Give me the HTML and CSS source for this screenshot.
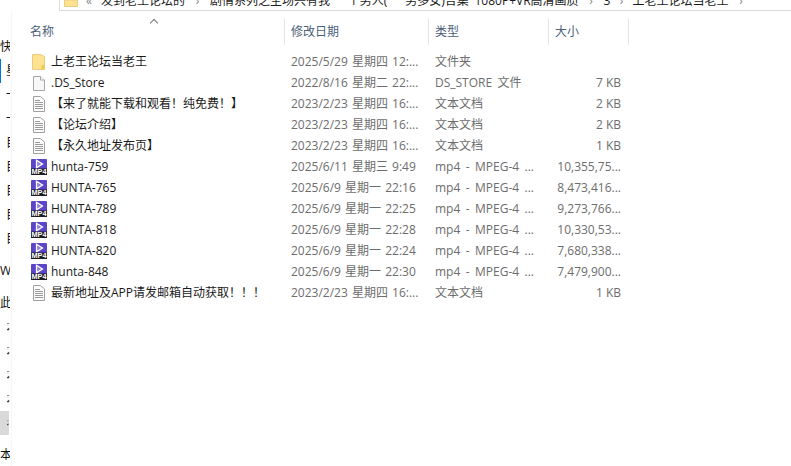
FILE: index.html
```html
<!DOCTYPE html>
<html lang="zh-CN">
<head>
    <meta charset="UTF-8">
    <meta name="viewport" content="width=device-width, initial-scale=1.0">
    <title>上老王论坛当老王</title>
    <link rel="stylesheet" href="styles.css">
</head>
<body>
    <svg class="icon-defs" width="0" height="0">
        <symbol id="pin" viewBox="0 0 4 12">
            <path d="M0 1.500H3M0 9.500L2.500 7.500V10H0Z" fill="#444" stroke="#333" stroke-width="0.800"/>
        </symbol>
        <symbol id="folder" viewBox="0 0 16 16">
            <path d="M1.500 0.500H9L13.500 2.500V15.500H1.500Z" fill="#ffe28f" stroke="#e8cd80"/>
            <path d="M10.500 11H13V15H10.500Z" fill="#f3c64f"/>
        </symbol>
        <symbol id="blank" viewBox="0 0 16 16">
            <path d="M2.500 1.500H9.500L13.500 5V15.500H2.500Z" fill="#f8f8f8" stroke="#a6a6a6"/>
            <path d="M9.500 1.500V5H13.500" fill="#fff" stroke="#a6a6a6"/>
        </symbol>
        <symbol id="txt" viewBox="0 0 16 16">
            <path d="M2.500 0.500H9.500L13.500 4V15.500H2.500Z" fill="#fbfbfb" stroke="#a0a0a0"/>
            <path d="M4 4.500H9M4 6.500H12M4 8.500H12M4 10.500H12M4 12.500H12" stroke="#9a9a9a"/>
        </symbol>
        <symbol id="mp4" viewBox="0 0 16 16">
            <path d="M1 0H15a1 1 0 0 1 1 1V10H0V1a1 1 0 0 1 1-1Z" fill="#5b45c8"/>
            <path d="M5.500 1.200L11.500 5L5.500 8.800Z" fill="#8f7fe0" stroke="#fff" stroke-width="1.300"/>
            <rect y="9.500" width="16" height="6.500" fill="#1c1c22"/>
            <text x="8" y="15.300" textLength="15" lengthAdjust="spacingAndGlyphs" class="mp4-label">MP4</text>
        </symbol>
    </svg>

    <div class="addressbar">
        <svg class="addr-folder" width="14" height="7" viewBox="0 0 14 7">
            <path d="M0.500 0V6.500H13.500V0Z" fill="#ffe28f" stroke="#e8cd80"/>
        </svg>
        <span class="crumb-back">«</span>
        <span class="crumb">发到老王论坛的</span>
        <span class="crumb-sep">›</span>
        <span class="crumb crumb-long">剧情系列之圣场兴有我 一个男人( 一男多女)合集 1080P+VR高清画质</span>
        <span class="crumb-sep">›</span>
        <span class="crumb">3</span>
        <span class="crumb-sep short">›</span>
        <span class="crumb">上老王论坛当老王</span>
        <span class="crumb-sep">›</span>
    </div>

    <div class="explorer">
        <nav class="sidebar">
            <div class="nav-item head">快速访问</div>
            <div class="nav-item current">星标</div>
            <div class="nav-item">一</div>
            <div class="nav-item">一</div>
            <div class="nav-item">目录</div>
            <div class="nav-item">目录</div>
            <div class="nav-item">目录</div>
            <div class="nav-item">目录</div>
            <div class="nav-item">目录</div>
            <div class="nav-item head">WPS</div>
            <div class="nav-item head">此电脑</div>
            <div class="nav-item pin"><svg width="4" height="12"><use href="#pin"/></svg></div>
            <div class="nav-item pin"><svg width="4" height="12"><use href="#pin"/></svg></div>
            <div class="nav-item pin"><svg width="4" height="12"><use href="#pin"/></svg></div>
            <div class="nav-item pin"><svg width="4" height="12"><use href="#pin"/></svg></div>
            <div class="nav-item pin selected"><svg width="4" height="12"><use href="#pin"/></svg></div>
            <div class="nav-item head">本地磁盘</div>
        </nav>

        <main class="files">
            <div class="file-head">
                <div class="col-head name-head">名称<span class="sort-arrow"></span></div>
                <div class="col-head">修改日期</div>
                <div class="col-head">类型</div>
                <div class="col-head">大小</div>
            </div>

            <div class="file-row">
                <div class="name"><svg class="ficon"><use href="#folder"/></svg>上老王论坛当老王</div>
                <div class="cell">2025/5/29 星期四 12:...</div>
                <div class="cell type">文件夹</div>
                <div class="size"></div>
            </div>
            <div class="file-row">
                <div class="name"><svg class="ficon"><use href="#blank"/></svg>.DS_Store</div>
                <div class="cell">2022/8/16 星期二 22:...</div>
                <div class="cell type">DS_STORE 文件</div>
                <div class="size">7 KB</div>
            </div>
            <div class="file-row">
                <div class="name"><svg class="ficon"><use href="#txt"/></svg>【来了就能下载和观看！纯免费！】</div>
                <div class="cell">2023/2/23 星期四 16:...</div>
                <div class="cell type">文本文档</div>
                <div class="size">2 KB</div>
            </div>
            <div class="file-row">
                <div class="name"><svg class="ficon"><use href="#txt"/></svg>【论坛介绍】</div>
                <div class="cell">2023/2/23 星期四 16:...</div>
                <div class="cell type">文本文档</div>
                <div class="size">2 KB</div>
            </div>
            <div class="file-row">
                <div class="name"><svg class="ficon"><use href="#txt"/></svg>【永久地址发布页】</div>
                <div class="cell">2023/2/23 星期四 16:...</div>
                <div class="cell type">文本文档</div>
                <div class="size">1 KB</div>
            </div>
            <div class="file-row">
                <div class="name"><svg class="ficon"><use href="#mp4"/></svg>hunta-759</div>
                <div class="cell">2025/6/11 星期三 9:49</div>
                <div class="cell type">mp4 - MPEG-4 ...</div>
                <div class="size">10,355,75...</div>
            </div>
            <div class="file-row">
                <div class="name"><svg class="ficon"><use href="#mp4"/></svg>HUNTA-765</div>
                <div class="cell">2025/6/9 星期一 22:16</div>
                <div class="cell type">mp4 - MPEG-4 ...</div>
                <div class="size">8,473,416...</div>
            </div>
            <div class="file-row">
                <div class="name"><svg class="ficon"><use href="#mp4"/></svg>HUNTA-789</div>
                <div class="cell">2025/6/9 星期一 22:25</div>
                <div class="cell type">mp4 - MPEG-4 ...</div>
                <div class="size">9,273,766...</div>
            </div>
            <div class="file-row">
                <div class="name"><svg class="ficon"><use href="#mp4"/></svg>HUNTA-818</div>
                <div class="cell">2025/6/9 星期一 22:28</div>
                <div class="cell type">mp4 - MPEG-4 ...</div>
                <div class="size">10,330,53...</div>
            </div>
            <div class="file-row">
                <div class="name"><svg class="ficon"><use href="#mp4"/></svg>HUNTA-820</div>
                <div class="cell">2025/6/9 星期一 22:24</div>
                <div class="cell type">mp4 - MPEG-4 ...</div>
                <div class="size">7,680,338...</div>
            </div>
            <div class="file-row">
                <div class="name"><svg class="ficon"><use href="#mp4"/></svg>hunta-848</div>
                <div class="cell">2025/6/9 星期一 22:30</div>
                <div class="cell type">mp4 - MPEG-4 ...</div>
                <div class="size">7,479,900...</div>
            </div>
            <div class="file-row">
                <div class="name"><svg class="ficon"><use href="#txt"/></svg>最新地址及APP请发邮箱自动获取！！！</div>
                <div class="cell">2023/2/23 星期四 16:...</div>
                <div class="cell type">文本文档</div>
                <div class="size">1 KB</div>
            </div>
        </main>
    </div>
</body>
</html>
```

FILE: styles.css
```css
html, body {
    height: 100%;
}

body {
    margin: 0;
    background-color: #ffffff;
    font-family: "Open Sans", "Noto Sans CJK SC", sans-serif;
    font-size: 12px;
    overflow: hidden;
}

.icon-defs {
    display: block;
}

.mp4-label {
    font-family: "Liberation Sans", sans-serif;
    font-size: 7px;
    font-weight: 700;
    fill: #ffffff;
    text-anchor: middle;
}

/* only the lower half of the address bar is in the shot */
.addressbar {
    height: 10px;
    margin-left: 59px;
    padding-left: 4px;
    border-left: 1px solid #dcdcdc;
    border-bottom: 1px solid #d9d9d9;
    display: flex;
    align-items: flex-start;
    overflow: hidden;
    white-space: nowrap;
    line-height: 18px;
    color: #1a1a1a;
}

.addressbar span {
    flex: none;
    margin-top: -8px;
}

.addr-folder {
    flex: none;
}

.crumb-back {
    margin-left: 8px;
    margin-right: 9px;
    color: #888888;
}

.crumb-long {
    word-spacing: 2.700px;
}

.crumb-sep {
    width: 25px;
    text-align: center;
    color: #888888;
}

.crumb-sep.short {
    width: 22px;
}

.explorer {
    display: flex;
}

.sidebar {
    flex: none;
    width: 12px;
    height: 455px;
    border-right: 1px solid #f6f6f6;
    overflow: hidden;
    padding-top: 24px;
    box-sizing: border-box;
}

.nav-item {
    width: 10px;
    height: 24px;
    line-height: 24px;
    padding-left: 6px;
    box-sizing: border-box;
    overflow: hidden;
    white-space: nowrap;
    color: #111111;
}

.nav-item.head {
    padding-left: 0;
    margin-top: 8px;
}

.nav-item.head:first-child {
    margin-top: 0;
}

.nav-item.current {
    border-left: 1px solid #0078d4;
    padding-left: 5px;
}

.nav-item.pin {
    display: flex;
    align-items: center;
    padding-left: 7px;
}

.nav-item.selected {
    width: 9px;
    background-color: #d9d9d9;
}

.files {
    flex: 1;
    padding-top: 7px;
}

.file-head, .file-row {
    display: grid;
    grid-template-columns: 273px 144px 120px 80px;
}

.file-head {
    height: 27px;
    margin-bottom: 6px;
}

.col-head {
    padding-left: 6px;
    line-height: 27px;
    color: #4c607a;
    border-right: 1px solid #e5e5e5;
}

.name-head {
    position: relative;
    padding-left: 18px;
}

.sort-arrow {
    position: absolute;
    left: 139px;
    top: 2px;
    width: 5px;
    height: 5px;
    border-left: 1px solid #777777;
    border-top: 1px solid #777777;
    transform: rotate(45deg);
}

.file-row {
    height: 21px;
    line-height: 21px;
    color: #6d6d6d;
}

.name {
    display: flex;
    align-items: center;
    padding-left: 19px;
    color: #1a1a1a;
    white-space: nowrap;
}

.ficon {
    flex: none;
    width: 16px;
    height: 16px;
    margin-right: 4px;
}

.cell {
    padding-left: 6px;
    white-space: nowrap;
    word-spacing: 1px;
}

.cell.type {
    word-spacing: 2.300px;
}

.size {
    padding-right: 8px;
    text-align: right;
    white-space: nowrap;
}
```
